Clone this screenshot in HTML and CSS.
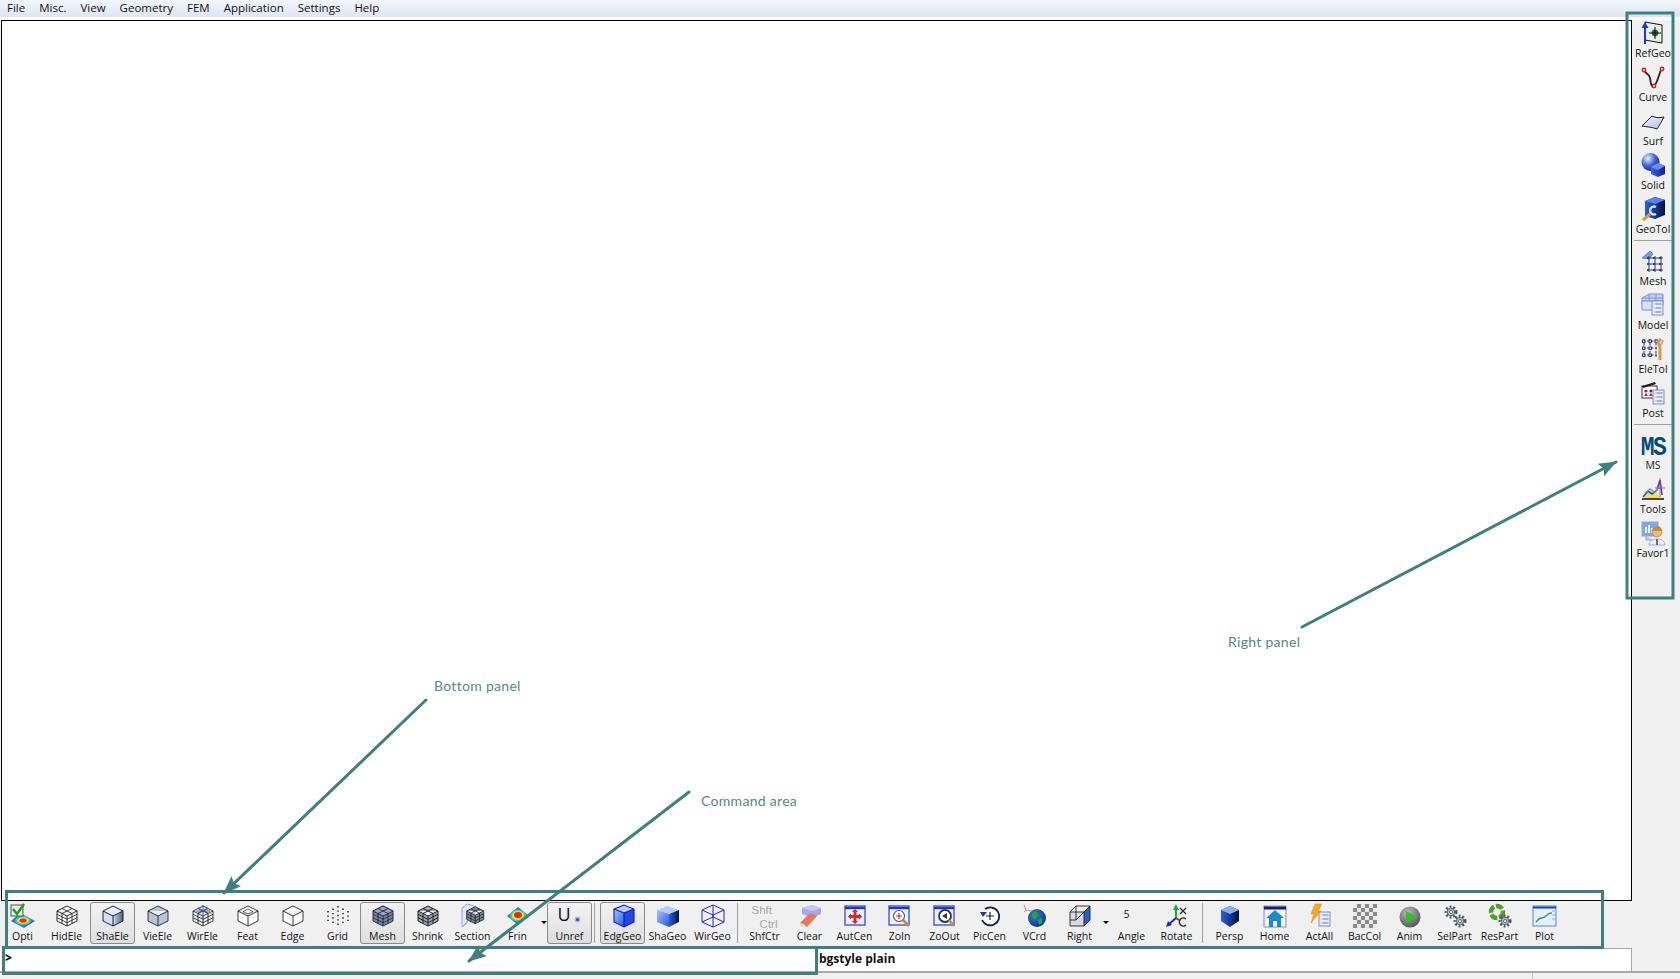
FILE: index.html
```html
<!DOCTYPE html>
<html lang="en">
<head>
    <meta charset="UTF-8">
    <title>Pre-processor window</title>
    <link rel="stylesheet" href="styles.css">
</head>
<body>
<!-- shared gradients and shapes for the toolbar icons -->
<svg class="defs" aria-hidden="true">
    <defs>
        <linearGradient id="gPale" x1="0" y1="0" x2="1" y2="1"><stop offset="0" stop-color="#f2f6ff"/><stop offset="1" stop-color="#a9bce8"/></linearGradient>
        <linearGradient id="gSide" x1="0" y1="0" x2="1" y2="0"><stop offset="0" stop-color="#cdd8ee"/><stop offset="1" stop-color="#4a5f8c"/></linearGradient>
        <linearGradient id="gBlue" x1="0" y1="0" x2="1" y2="0"><stop offset="0" stop-color="#3b63ea"/><stop offset="1" stop-color="#0c1f8a"/></linearGradient>
        <linearGradient id="gDark" x1="0" y1="0" x2="1" y2="0"><stop offset="0" stop-color="#2b5fe0"/><stop offset="1" stop-color="#06103c"/></linearGradient>
        <linearGradient id="gLeft" x1="0" y1="0" x2="1" y2="1"><stop offset="0" stop-color="#a9c4ff"/><stop offset="1" stop-color="#2a56e0"/></linearGradient>
        <radialGradient id="gBall" cx=".35" cy=".3" r=".8"><stop offset="0" stop-color="#e8eeff"/><stop offset=".5" stop-color="#4468d8"/><stop offset="1" stop-color="#0d1d78"/></radialGradient>
        <radialGradient id="gGrey" cx=".4" cy=".3" r=".8"><stop offset="0" stop-color="#bbbbbb"/><stop offset="1" stop-color="#4a4a4a"/></radialGradient>
        <radialGradient id="gGlobe" cx=".4" cy=".35" r=".8"><stop offset="0" stop-color="#3a7ae0"/><stop offset="1" stop-color="#062a70"/></radialGradient>
        <path id="cubeLine" d="M12 2 22 7V17L12 22 2 17V7ZM2 7l10 5 10-5M12 12V22"/>
        <path id="cubeGrid" d="M2 10.300l10 5 10-5M2 13.700l10 5 10-5M7 9.500v10M17 9.500v10M7 4.500l10 5M17 4.500l-10 5"/>
        <g id="gear">
            <circle r="5" fill="none" stroke="#4d5662" stroke-width="3" stroke-dasharray="1.800 1.800"/>
            <circle r="3.800" fill="#b4bcc6" stroke="#49525e" stroke-width=".8"/>
            <circle r="1.500" fill="#fff" stroke="#343c48" stroke-width=".7"/>
        </g>
        <g id="listDoc">
            <rect x="0" y="0" width="11" height="14" fill="#e6ecfa" stroke="#7d8fc4"/>
            <path d="M3.500 3h6M3.500 7h6M3.500 11h6" stroke="#6a7aa8"/>
            <path d="M1.500 3h1M1.500 7h1M1.500 11h1" stroke="#e0b020"/>
        </g>
    </defs>
</svg>

<div class="app">
    <nav class="menubar">
        <span>File</span><span>Misc.</span><span>View</span><span>Geometry</span><span>FEM</span><span>Application</span><span>Settings</span><span>Help</span>
    </nav>

    <div class="main">
        <div class="canvas"></div>
        <aside class="sidepanel">
            <div class="sidetool">
                <svg class="ico" viewBox="0 0 24 24"><path d="M4 1 21 4V22L4 19Z" fill="#e4f2e4" stroke="#111"/><circle cx="14" cy="12" r="3.400" fill="#555"/><path d="M14 6v12M8 12h12" stroke="#111"/><path d="M4 23V6" stroke="#1a35d8" stroke-width="2"/><path d="M4 1 .5 7h7Z" fill="#1a35d8"/></svg>
                <span>RefGeo</span>
            </div>
            <div class="sidetool">
                <svg class="ico" viewBox="0 0 24 24"><path d="M3 5C4 9 8 8 9 13S10 23 13 21 17 12 20 5" fill="none" stroke="#222" stroke-width="1.800"/><g fill="#fff" stroke="#d01818" stroke-width="1.400"><circle cx="3" cy="5" r="1.700"/><circle cx="13" cy="21" r="1.700"/><circle cx="21" cy="4" r="1.700"/></g></svg>
                <span>Curve</span>
            </div>
            <div class="sidetool">
                <svg class="ico" viewBox="0 0 24 24"><path d="M1 17 11 7C15 9 19 9 23 8 21 12 18 17 16 20 11 18 6 18 1 17Z" fill="url(#gPale)" stroke="#222"/></svg>
                <span>Surf</span>
            </div>
            <div class="sidetool">
                <svg class="ico" viewBox="0 0 24 24"><circle cx="9.500" cy="9" r="9" fill="url(#gBall)"/><path d="M10 14 17 10 24 13V21L17 24 10 21Z" fill="url(#gBlue)"/><path d="M10 14 17 10 24 13 17 17Z" fill="#6c8cf0"/></svg>
                <span>Solid</span>
            </div>
            <div class="sidetool">
                <svg class="ico" viewBox="0 0 24 24"><path d="M4 4 14 0 24 3V18L14 22 4 19Z" fill="url(#gDark)"/><path d="M4 4 14 0 24 3 14 7Z" fill="#5c7cf0"/><path d="M15 10A4 4 0 1 0 15 17" fill="none" stroke="#d8dce4" stroke-width="2.400"/><path d="M9 17 2 23" stroke="#d89a30" stroke-width="3"/></svg>
                <span>GeoTol</span>
            </div>
            <div class="sidesep"></div>
            <div class="sidetool">
                <svg class="ico" viewBox="0 0 24 24"><path d="M1 9 9 2 12 5 8 10Z" fill="#6f9cf0" stroke="#3a60c0" stroke-width=".6"/><path d="M6 9h16M6 15h16M6 21h16M8 7v16M14 7v16M20 7v16" stroke="#333a66" fill="none"/><path d="M6 9h16M6 15h16M6 21h16" stroke="#1a2a90" stroke-width="1.400" stroke-dasharray="2 4"/></svg>
                <span>Mesh</span>
            </div>
            <div class="sidetool">
                <svg class="ico" viewBox="0 0 24 24"><path d="M1 5 8 1H22V12H1Z" fill="#bcd0f4" stroke="#7f95cc"/><path d="M1 8h21M8 1v14M15 1v14M1 5h21" stroke="#7f95cc" fill="none"/><rect x="1" y="8" width="11" height="9" fill="#d6e2f8" stroke="#7f95cc"/><use href="#listDoc" x="11" y="8"/></svg>
                <span>Model</span>
            </div>
            <div class="sidetool">
                <svg class="ico" viewBox="0 0 24 24"><path d="M2 4h14M2 11h14M2 18h14M3 2v18M9 2v18M15 2v18" stroke="#333" fill="none" stroke-dasharray="2.500 1.500"/><g fill="#fff" stroke="#1a2a90"><rect x="1.500" y="3" width="2.400" height="2.400"/><rect x="8" y="3" width="2.400" height="2.400"/><rect x="14" y="3" width="2.400" height="2.400"/><rect x="1.500" y="10" width="2.400" height="2.400"/><rect x="8" y="10" width="2.400" height="2.400"/><rect x="1.500" y="17" width="2.400" height="2.400"/><rect x="8" y="17" width="2.400" height="2.400"/></g><path d="M20 2 17 5 19 10V23" fill="none" stroke="#d89a50" stroke-width="3"/><path d="M22 3 20 8" stroke="#aab" stroke-width="2"/></svg>
                <span>EleTol</span>
            </div>
            <div class="sidetool">
                <svg class="ico" viewBox="0 0 24 24"><rect x="1" y="5" width="15" height="12" fill="#fff" stroke="#333"/><path d="M1 5 14 1 15 3 2 7Z" fill="#222"/><circle cx="5" cy="10" r="1.600" fill="#d81818"/><circle cx="10" cy="10" r="1.600" fill="#1a35d8"/><path d="M3 15l2-3 2 3ZM8 15l2-3 2 3Z" fill="#d81818"/><use href="#listDoc" x="12" y="9"/></svg>
                <span>Post</span>
            </div>
            <div class="sidesep"></div>
            <div class="sidetool">
                <div class="mslogo">MS</div>
                <span class="mslabel">MS</span>
            </div>
            <div class="sidetool">
                <svg class="ico" viewBox="0 0 24 24"><path d="M3 22 5 17 11 13 16 15 19 20 22 22Z" fill="#f4e060"/><path d="M2 20 7 14 11 17 16 13 19 3 21 18" fill="none" stroke="#2a48c0" stroke-width="1.600"/><path d="M4 16 9 12 13 15 18 11" fill="none" stroke="#7090e0" stroke-width="1.400"/><path d="M19 1V20M14 11H24" stroke="#d04040" stroke-width=".8"/><path d="M1 22H23" stroke="#222" stroke-width="1.600"/></svg>
                <span>Tools</span>
            </div>
            <div class="sidetool">
                <svg class="ico" viewBox="0 0 24 24"><rect x="1" y="1" width="16" height="14" fill="#7fa8e8" stroke="#9fa8b8"/><path d="M5 12V6M8 12V4M11 12V7" stroke="#fff" stroke-width="1.600"/><path d="M5 15V19H12" fill="#c8ccd4" stroke="#9fa8b8"/><circle cx="16" cy="11" r="5" fill="#e8b888" stroke="#a07040" stroke-width=".6"/><path d="M11 10A5 5 0 0 1 21 10Z" fill="#c09040"/><path d="M8 24C8 16 24 16 24 24Z" fill="#e8eef8" stroke="#8090b0" stroke-width=".6"/><path d="M16 18V24" stroke="#2a48c0" stroke-width="1.600"/></svg>
                <span>Favor1</span>
            </div>
        </aside>
    </div>

    <div class="toolbar">
        <div class="tool">
            <svg class="ico" viewBox="0 0 24 24"><path d="M0 17 9 9 24 17 13 24Z" fill="#2a6ee8"/><ellipse cx="12" cy="16.500" rx="8" ry="4.500" fill="#34c8b0"/><ellipse cx="12" cy="16.500" rx="6" ry="3.300" fill="#f2e030"/><ellipse cx="12" cy="16.500" rx="3.600" ry="2" fill="#e82a18"/><rect x="0" y="1" width="12" height="11" fill="#e8e8e8" stroke="#555"/><path d="M2 5 6 10 13 0" fill="none" stroke="#18a018" stroke-width="2.400"/></svg>
            <span>Opti</span>
        </div>
        <div class="tool nudge">
            <svg class="ico" viewBox="0 0 24 24"><g fill="#fff" stroke="#111" stroke-width=".9"><use href="#cubeLine"/></g><g fill="none" stroke="#111" stroke-width=".8"><use href="#cubeGrid"/></g></svg>
            <span>HidEle</span>
        </div>
        <div class="tool on">
            <svg class="ico" viewBox="0 0 24 24"><path d="M12 2 22 7 12 12 2 7Z" fill="#e4ecff"/><path d="M2 7 12 12V22L2 17Z" fill="#d4def8"/><path d="M22 7 12 12V22L22 17Z" fill="url(#gSide)"/><g fill="none" stroke="#111" stroke-width=".9"><use href="#cubeLine"/></g></svg>
            <span>ShaEle</span>
        </div>
        <div class="tool">
            <svg class="ico" viewBox="0 0 24 24"><g fill="#b9c3da" stroke="#222" stroke-width=".9"><use href="#cubeLine"/></g></svg>
            <span>VieEle</span>
        </div>
        <div class="tool">
            <svg class="ico" viewBox="0 0 24 24"><g fill="none" stroke="#111" stroke-width=".8"><use href="#cubeLine"/><use href="#cubeGrid"/></g><path d="M12 1V14M7 4 17 9M17 4 7 9M5 7H19" fill="none" stroke="#3a50b8" stroke-width=".9"/></svg>
            <span>WirEle</span>
        </div>
        <div class="tool">
            <svg class="ico" viewBox="0 0 24 24"><g fill="#fff" stroke="#222" stroke-width=".9"><use href="#cubeLine"/></g><path d="M12 5 17 7.500 12 10 7 7.500Z" fill="none" stroke="#222" stroke-width=".7"/></svg>
            <span>Feat</span>
        </div>
        <div class="tool">
            <svg class="ico" viewBox="0 0 24 24"><g fill="#fff" stroke="#222" stroke-width=".9"><use href="#cubeLine"/></g></svg>
            <span>Edge</span>
        </div>
        <div class="tool">
            <svg class="ico" viewBox="0 0 24 24"><path d="M12 2V22M7 4.500V19.500M17 4.500V19.500M2 7V17M22 7V17" stroke="#111" stroke-width="1.400" stroke-dasharray="1.400 3" fill="none"/></svg>
            <span>Grid</span>
        </div>
        <div class="tool on">
            <svg class="ico" viewBox="0 0 24 24"><g fill="#7c89aa" stroke="#1c2030" stroke-width=".9"><use href="#cubeLine"/></g><path d="M12 2 22 7 12 12 2 7Z" fill="#9aa6c4" stroke="#1c2030" stroke-width=".8"/><g fill="none" stroke="#1c2030" stroke-width=".8"><use href="#cubeGrid"/></g></svg>
            <span>Mesh</span>
        </div>
        <div class="tool">
            <svg class="ico" viewBox="0 0 24 24"><g fill="#a0a6b2" stroke="#222" stroke-width="1"><use href="#cubeLine"/></g><g fill="none" stroke="#222" stroke-width="1"><use href="#cubeGrid"/></g></svg>
            <span>Shrink</span>
        </div>
        <div class="tool">
            <svg class="ico" viewBox="0 0 24 24"><path d="M1 4 6 0V19L1 23Z" fill="#dfe4fa" stroke="#8088e0" stroke-width=".8"/><path d="M6 0 13 2V10L1 23" fill="#e8ecfc" stroke="#8088e0" stroke-width=".8"/><g transform="translate(4 1) scale(.85)"><g fill="#7c89a0" stroke="#222" stroke-width="1"><use href="#cubeLine"/></g><g fill="none" stroke="#222" stroke-width=".9"><use href="#cubeGrid"/></g></g></svg>
            <span>Section</span>
        </div>
        <div class="tool">
            <svg class="ico" viewBox="0 0 24 24"><path d="M1 12 12 3 23 12 12 21Z" fill="#2d72e8"/><ellipse cx="12" cy="11.500" rx="8" ry="6" fill="#3cd0a0"/><ellipse cx="12" cy="11.500" rx="6" ry="4.500" fill="#f4e42c"/><ellipse cx="12" cy="11" rx="4" ry="3" fill="#e82818"/></svg>
            <span>Frin</span>
        </div>
        <div class="dropdown"></div>
        <div class="tool on">
            <div class="unref">U<i></i></div>
            <span>Unref</span>
        </div>
        <div class="sep"></div>
        <div class="tool on">
            <svg class="ico" viewBox="0 0 24 24"><path d="M3 5 13 1 23 5 13 9Z" fill="#b8ccff"/><path d="M3 5 13 9V23L3 18Z" fill="url(#gLeft)"/><path d="M23 5 13 9V23L23 18Z" fill="#2846e0"/><path d="M3 5 13 1 23 5V18L13 23 3 18ZM3 5 13 9 23 5M13 9V23" fill="none" stroke="#0818c8" stroke-width="1.100"/></svg>
            <span>EdgGeo</span>
        </div>
        <div class="tool">
            <svg class="ico" viewBox="0 0 24 24"><path d="M1 6 11 2 23 6 13 10Z" fill="#b8ccff"/><path d="M1 6 13 10V23L1 18Z" fill="url(#gLeft)"/><path d="M23 6 13 10V23L23 18Z" fill="url(#gDark)"/></svg>
            <span>ShaGeo</span>
        </div>
        <div class="tool">
            <svg class="ico" viewBox="0 0 24 24"><path d="M1 6 12 1 23 6V18L12 23 1 18ZM1 6 12 11 23 6M12 11V23M1 18 12 13 23 18M12 1V13" fill="none" stroke="#2426c8" stroke-width="1"/></svg>
            <span>WirGeo</span>
        </div>
        <div class="sep narrow"></div>
        <div class="tool">
            <div class="keys"><b>Shft</b><b class="ctrl">Ctrl</b></div>
            <span>ShfCtr</span>
        </div>
        <div class="tool">
            <svg class="ico" viewBox="0 0 24 24"><path d="M4 4 14 1 23 4V10L14 14 4 10Z" fill="#a8a8e8"/><path d="M4 4 14 7 23 4 14 1Z" fill="#c8c8f4"/><path d="M2 19 12 9 19 12 9 23 4 23Z" fill="#e87858"/><path d="M2 19 4 23H9L6 20Z" fill="#f0e0d0"/></svg>
            <span>Clear</span>
        </div>
        <div class="tool">
            <svg class="ico" viewBox="0 0 24 24"><rect x="2" y="2" width="20" height="19" fill="#eef0ff" stroke="#4058d8" stroke-width="1.400"/><path d="M2 4H22" stroke="#2038b8" stroke-width="2.400"/><path d="M12 6V19M6 12.500H18" stroke="#d82828" stroke-width="2.800"/><path d="M12 5 9 8H15ZM12 20 9 17H15ZM5 12.500 8 9.500V15.500ZM19 12.500 16 9.500V15.500Z" fill="#d82828"/></svg>
            <span>AutCen</span>
        </div>
        <div class="tool">
            <svg class="ico" viewBox="0 0 24 24"><rect x="1" y="2" width="20" height="19" fill="#eef0ff" stroke="#4058d8" stroke-width="1.400"/><path d="M1 4H21" stroke="#2038b8" stroke-width="2.400"/><circle cx="11" cy="12" r="5.500" fill="#fff" stroke="#505868" stroke-width="1.200"/><path d="M11 9V15M8 12H14" stroke="#d82828" stroke-width="1.200"/><path d="M15 16 21 22" stroke="#b89048" stroke-width="2.600"/></svg>
            <span>ZoIn</span>
        </div>
        <div class="tool">
            <svg class="ico" viewBox="0 0 24 24"><rect x="1" y="2" width="20" height="19" fill="#eef0ff" stroke="#4058d8" stroke-width="1.400"/><path d="M1 4H21" stroke="#2038b8" stroke-width="2.400"/><circle cx="12" cy="12" r="6" fill="#fff" stroke="#303848" stroke-width="1.800"/><path d="M14 9 9 12 14 15Z" fill="#303848"/><path d="M16 16 21 22" stroke="#b89048" stroke-width="2.600"/></svg>
            <span>ZoOut</span>
        </div>
        <div class="tool">
            <svg class="ico" viewBox="0 0 24 24"><path d="M4 16A9 9 0 1 0 7 5" fill="#fff" stroke="#141c4c" stroke-width="1.800"/><path d="M2 8 9 8 5 13Z" fill="#1c3c90"/><path d="M12 8V16M8 12H16" stroke="#222" stroke-width="1.200"/></svg>
            <span>PicCen</span>
        </div>
        <div class="tool">
            <svg class="ico" viewBox="0 0 24 24"><circle cx="14" cy="14" r="9" fill="url(#gGlobe)"/><path d="M9 9 13 7 15 11 12 15 9 13ZM15 16 19 14 19 19 16 21Z" fill="#20a830"/><path d="M1 1 3 6 9 7M3 6 1 8" fill="none" stroke="#e88080" stroke-width="1"/></svg>
            <span>VCrd</span>
        </div>
        <div class="tool">
            <svg class="ico" viewBox="0 0 24 24"><path d="M2 8H16V22H2Z" fill="#d8d8e4"/><path d="M16 8 22 2V16L16 22Z" fill="#2a62c8"/><path d="M2 8 8 2H22V16L16 22H2ZM2 8H16V22M16 8 22 2M8 2V16H2M8 16 16 8" fill="none" stroke="#222" stroke-width=".9"/></svg>
            <span>Right</span>
        </div>
        <div class="dropdown"></div>
        <div class="tool">
            <div class="angle">5</div>
            <span>Angle</span>
        </div>
        <div class="tool">
            <svg class="ico" viewBox="0 0 24 24"><path d="M11 14V3" stroke="#10b038" stroke-width="2"/><path d="M11 0 8 6H14Z" fill="#10b038"/><path d="M11 14 3 21" stroke="#1a2ac8" stroke-width="2"/><path d="M1 23 3 17 7 21Z" fill="#1a2ac8"/><path d="M11 14 14 16" stroke="#c02020" stroke-width="2"/><path d="M15 4 21 10M21 4 15 10" stroke="#222" stroke-width="1.200"/><path d="M21 15A4 4 0 1 0 21 21" fill="none" stroke="#222" stroke-width="1.400"/></svg>
            <span>Rotate</span>
        </div>
        <div class="sep tight"></div>
        <div class="tool">
            <svg class="ico" viewBox="0 0 24 24"><path d="M3 6 12 2 21 6V17L12 23 3 17Z" fill="url(#gDark)"/><path d="M3 6 12 2 21 6 12 10Z" fill="#8eaaf4"/></svg>
            <span>Persp</span>
        </div>
        <div class="tool">
            <svg class="ico" viewBox="0 0 24 24"><rect x="1" y="2" width="22" height="21" fill="#f4f4f8" stroke="#8888b0"/><path d="M1 4H23" stroke="#101c80" stroke-width="3"/><path d="M3 14 12 6 21 14H18V23H14V17H10V23H6V14Z" fill="#1c8cc8"/></svg>
            <span>Home</span>
        </div>
        <div class="tool">
            <svg class="ico" viewBox="0 0 24 24"><path d="M7 0H14L10 7H13L3 19 6 10H3Z" fill="#f4a820" stroke="#e88010" stroke-width=".5"/><use href="#listDoc" x="11" y="8"/></svg>
            <span>ActAll</span>
        </div>
        <div class="tool">
            <div class="checker"></div>
            <span>BacCol</span>
        </div>
        <div class="tool">
            <svg class="ico" viewBox="0 0 24 24"><circle cx="12" cy="13" r="10.500" fill="url(#gGrey)"/><path d="M8 7 19 13 8 19Z" fill="#28c428"/></svg>
            <span>Anim</span>
        </div>
        <div class="tool">
            <svg class="ico" viewBox="0 0 24 24"><use href="#gear" x="8" y="8"/><use href="#gear" x="17" y="17"/></svg>
            <span>SelPart</span>
        </div>
        <div class="tool">
            <svg class="ico" viewBox="0 0 24 24"><circle cx="9" cy="8" r="6" fill="none" stroke="#50a030" stroke-width="4.500" stroke-dasharray="7 1.800"/><use href="#gear" x="17" y="17"/></svg>
            <span>ResPart</span>
        </div>
        <div class="tool">
            <svg class="ico" viewBox="0 0 24 24"><rect x="0" y="2" width="23" height="20" fill="#e4f0ff" stroke="#5888c8"/><path d="M0 3.500H23" stroke="#1848a8" stroke-width="2"/><path d="M3 18C7 12 10 15 13 12S16 9 19 9" fill="none" stroke="#30a050" stroke-width="1.400"/><path d="M19 7H23M19 11H23M19 15H23" stroke="#88a8d8"/></svg>
            <span>Plot</span>
        </div>
    </div>

    <div class="cmdrow">
        <div class="cmdinput"><b>&gt;</b></div>
        <div class="cmdlog">bgstyle plain</div>
    </div>
    <div class="statusbar"><i></i></div>
</div>

<!-- annotations drawn over the screenshot -->
<svg class="notes" viewBox="0 0 1680 979">
    <defs>
        <marker id="head" markerUnits="userSpaceOnUse" markerWidth="20" markerHeight="14" refX="17" refY="7" orient="auto"><path d="M0 0 18 7 0 14 3 7Z" fill="#3f7f7d"/></marker>
    </defs>
    <rect x="6.500" y="891.500" width="1596" height="56"/>
    <rect x="3.500" y="947.500" width="813" height="26"/>
    <rect x="1627" y="13" width="46" height="585"/>
    <path d="M426 700 224 893" marker-end="url(#head)"/>
    <path d="M689 792 469 961" marker-end="url(#head)"/>
    <path d="M1302 627 1616 462" marker-end="url(#head)"/>
</svg>
<div class="note note-bottom">Bottom panel</div>
<div class="note note-command">Command area</div>
<div class="note note-right">Right panel</div>
</body>
</html>
```

FILE: styles.css
```css
html, body {
    margin: 0;
    padding: 0;
    background: #fff;
}
body {
    position: relative;
    width: 1680px;
    height: 979px;
    overflow: hidden;
    font-family: "Open Sans", Arial, sans-serif;
    font-size: 10.5px;
    color: #111;
}
.defs {
    position: absolute;
    width: 0;
    height: 0;
}
.app {
    display: flex;
    flex-direction: column;
    height: 979px;
    background: #f0f0f0;
}

/* menu */
.menubar {
    flex: none;
    display: flex;
    gap: 14px;
    height: 17px;
    padding-left: 7px;
    font-size: 11.5px;
    line-height: 15px;
    background: linear-gradient(#f3f6fc, #dde5f3);
}

/* canvas and right panel */
.main {
    flex: 1;
    display: flex;
    min-height: 0;
    padding-top: 3px;
    background: linear-gradient(#fff 3px, #f0f0f0 3px);
}
.canvas {
    width: 1631px;
    margin-left: 1px;
    box-sizing: border-box;
    background: #fff;
    border: 1px solid #000;
}
.sidepanel {
    width: 40px;
    margin-left: 2px;
    display: flex;
    flex-direction: column;
}
.sidetool {
    flex: none;
    height: 44px;
    width: 38px;
    box-sizing: border-box;
    display: flex;
    flex-direction: column;
    align-items: center;
    padding-top: 1px;
}
.sidetool span {
    line-height: 14px;
    margin-top: 1px;
    white-space: nowrap;
}
.sidesep {
    flex: none;
    height: 8px;
    width: 38px;
    box-sizing: border-box;
    border-top: 1px solid #a0a0a0;
}
.mslogo {
    height: 24px;
    font-family: "Liberation Mono", monospace;
    font-weight: bold;
    font-size: 23px;
    line-height: 24px;
    color: #0b4a78;
    letter-spacing: -1.500px;
    transform: scaleY(1.2);
    transform-origin: 50% 0;
}
.mslabel {
    color: #222;
}

/* bottom toolbar */
.toolbar {
    flex: none;
    display: flex;
    height: 47px;
    box-sizing: border-box;
    padding-top: 1px;
}
.tool {
    flex: none;
    width: 45px;
    height: 42px;
    box-sizing: border-box;
    display: flex;
    flex-direction: column;
    align-items: center;
    padding-top: 1px;
    border: 1px solid transparent;
    border-radius: 3px;
}
.tool.on {
    border-color: #8a8a8a;
    background: linear-gradient(#f2f2f2, #dedede);
}
.tool.nudge {
    margin: 0 1px 0 -1px;
}
.tool span {
    line-height: 13px;
    margin-top: 2px;
    white-space: nowrap;
}
.ico {
    display: block;
    width: 24px;
    height: 24px;
    flex: none;
    overflow: visible;
}
.dropdown {
    flex: none;
    width: 7px;
    height: 42px;
    position: relative;
}
.dropdown::after {
    content: "";
    position: absolute;
    left: 1px;
    top: 19px;
    border: 3px solid transparent;
    border-top: 3px solid #000;
    border-bottom: 0;
}
.sep {
    flex: none;
    width: 1px;
    height: 40px;
    margin: 1px 5px 0 2px;
    background: #a0a0a0;
}
.sep.narrow {
    margin: 1px 4px 0 2px;
}
.sep.tight {
    margin: 1px 4px 0 3px;
}
.unref {
    width: 24px;
    height: 24px;
    position: relative;
    font-size: 18px;
    line-height: 20px;
}
.unref i {
    position: absolute;
    right: 3px;
    top: 14px;
    width: 3px;
    height: 3px;
    border-radius: 50%;
    background: #3a50a0;
    box-shadow: 0 0 0 1.500px #b0b8d8;
}
.keys {
    height: 24px;
    width: 26px;
    font-family: "Liberation Sans", Arial, sans-serif;
    font-size: 11.500px;
    line-height: 13.500px;
    color: #a8a8a8;
}
.keys b {
    display: block;
    font-weight: normal;
}
.keys .ctrl {
    text-align: right;
}
.angle {
    height: 24px;
    line-height: 20px;
    font-size: 10px;
    margin-right: 10px;
}
.checker {
    width: 24px;
    height: 24px;
    background: conic-gradient(#8a8a8a 25%, #e8e8e8 0 50%, #8a8a8a 0 75%, #e8e8e8 0) 0 0 / 8px 8px;
}

/* command row */
.cmdrow {
    flex: none;
    display: flex;
    height: 25px;
    box-sizing: border-box;
    border-bottom: 2px solid #a8a8a8;
}
.cmdinput, .cmdlog {
    background: #fff;
    line-height: 20px;
    font-size: 12px;
    font-weight: bold;
}
.cmdinput {
    width: 816px;
    padding-left: 5px;
    box-sizing: border-box;
}
.cmdlog {
    width: 816px;
    padding-left: 3px;
    box-sizing: border-box;
    border-right: 1px solid #a8a8a8;
    border-top: 1px solid #a8a8a8;
}
.statusbar {
    flex: none;
    height: 6px;
    position: relative;
}
.statusbar i {
    position: absolute;
    left: 1532px;
    top: 0;
    bottom: 0;
    width: 1px;
    background: #c8c8c8;
}

/* annotations */
.notes {
    position: absolute;
    left: 0;
    top: 0;
    width: 1680px;
    height: 979px;
    pointer-events: none;
}
.notes rect, .notes > path {
    fill: none;
    stroke: #3f7f7d;
    stroke-width: 3;
}
.notes > path {
    stroke-linecap: round;
}
.note {
    position: absolute;
    font-family: Lato, "Open Sans", sans-serif;
    font-size: 14px;
    line-height: 18px;
    letter-spacing: .3px;
    color: #4f8a88;
}
.note-bottom {
    left: 434px;
    top: 677px;
}
.note-command {
    left: 701px;
    top: 792px;
}
.note-right {
    left: 1228px;
    top: 633px;
}
```
